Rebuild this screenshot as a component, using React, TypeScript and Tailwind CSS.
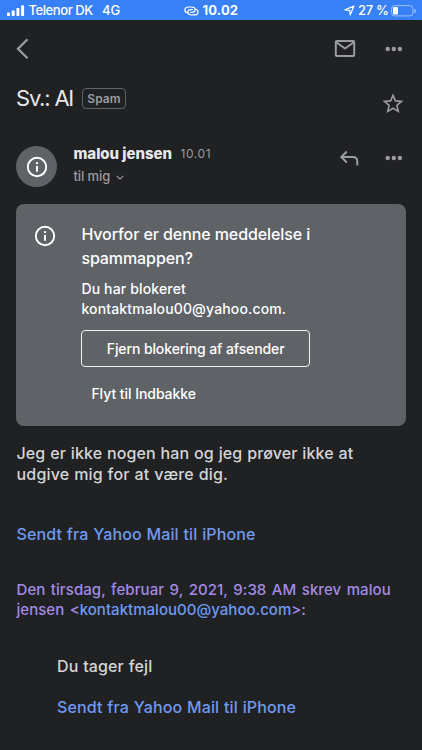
import React from "react";

function Dots() {
  return (
    <svg className="h-[6px] w-[18px] shrink-0" viewBox="0 0 18 6" fill="#9a9ca1">
      <circle cx="2.7" cy="3" r="2.2" />
      <circle cx="8.8" cy="3" r="2.2" />
      <circle cx="14.9" cy="3" r="2.2" />
    </svg>
  );
}

function Info() {
  return (
    <svg className="h-[22px] w-[22px] shrink-0" viewBox="0 0 22 22" fill="none">
      <circle cx="11" cy="11" r="9.2" stroke="#fff" strokeWidth="1.9" />
      <circle cx="11" cy="7.1" r="1.2" fill="#fff" />
      <path d="M11 10v5.8" stroke="#fff" strokeWidth="2" />
    </svg>
  );
}

function StatusBar() {
  return (
    <header className="flex h-5 items-center bg-[#3880f6] pt-px text-[13px] font-medium text-white">
      <svg className="ml-[7px] h-[12px] w-[18px]" viewBox="0 0 18 12" fill="#fff">
        <rect x="0" y="7.5" width="3" height="3.5" rx="0.7" />
        <rect x="4.7" y="5.5" width="3" height="5.5" rx="0.7" />
        <rect x="9.4" y="3" width="3" height="8" rx="0.7" />
        <rect x="14.1" y="0.3" width="3" height="10.7" rx="0.7" />
      </svg>
      <div className="ml-[3.5px] w-[73.5px] whitespace-nowrap tracking-[-0.42px]">Telenor DK</div>
      <div className="w-[81.5px]">4G</div>
      <svg className="h-[10px] w-[15px]" viewBox="0 0 15 10" fill="none" stroke="#fff" strokeWidth="1.2" strokeLinecap="round">
        <path d="M4.1 7C2 6.7.8 5.5.8 4 .8 2.2 2.5 1 4.8 1h2.7c2.2 0 3.7 1.1 3.7 2.700S9.700 6.400 7.700 6.400H6.500" />
        <path d="M10.700 3c2.100.3 3.400 1.400 3.400 2.900 0 1.800-1.700 3-4 3H7.500c-2.200 0-3.700-1-3.700-2.600S5.200 3.700 7.200 3.700h1.300" />
      </svg>
      <div className="ml-[4px] w-[141px] font-bold tracking-[0.15px]">10.02</div>
      <svg className="h-[11px] w-[11px]" viewBox="0 0 11 11" fill="none" stroke="#fff" strokeWidth="1.2" strokeLinejoin="round">
        <path d="M.9 4.900 9.900 1 6.200 9.900 5.700 5.300Z" />
      </svg>
      <div className="ml-[3.500px] w-[33px] whitespace-nowrap tracking-[-0.3px]">27 %</div>
      <svg className="h-[12px] w-[26px]" viewBox="0 0 26 12" fill="none">
        <rect x="0.6" y="0.6" width="21.300" height="10.300" rx="3" stroke="#9bbffb" />
        <rect x="2" y="2" width="5" height="7.500" rx="1.300" fill="#fff" />
        <path d="M23.300 4v4c1.200-.3 1.600-1 1.600-2s-.4-1.700-1.600-2Z" fill="#9bbffb" />
      </svg>
    </header>
  );
}

export default function App() {
  return (
    <div className="h-[750px] w-[422px] overflow-hidden bg-[#202123] font-['Inter','Liberation_Sans',sans-serif] text-[#d5d5d6]">
      <StatusBar />
      <nav className="flex h-[57px] items-center pl-4 pr-[19px]">
        <svg className="h-[22px] w-[14px]" viewBox="0 0 14 22" fill="none" stroke="#9a9ca1" strokeWidth="2.300">
          <path d="M11.500 1.200 2 10.700l9.500 9.500" />
        </svg>
        <svg className="ml-auto h-[18px] w-[22px]" viewBox="0 0 22 18" fill="none" stroke="#9a9ca1" strokeWidth="2" strokeLinejoin="round">
          <rect x="1.800" y="1" width="18.400" height="15" rx="1" />
          <path d="m2.200 2.300 8.800 6.200 8.800-6.200" />
        </svg>
        <div className="ml-[29px] flex"><Dots /></div>
      </nav>
      <section className="flex h-[69px] items-start pl-4 pr-[18px]">
        <h1 className="mt-[6px] w-[66px] whitespace-nowrap text-[22px] leading-[30px] tracking-[-1.200px] text-[#e8e8ea]">Sv.: AI</h1>
        <span className="mt-[11px] flex h-[21px] w-[44px] items-center justify-center rounded-[4px] border border-[#5f6368] text-[12px] font-semibold tracking-[0.1px] text-[#9a9ca1]">Spam</span>
        <svg className="ml-auto mt-[16px] h-[21px] w-[22px]" viewBox="0 0 22 21" fill="none" stroke="#9a9ca1" strokeWidth="1.600">
          <path d="m11 2.300 2.400 5.600 6.100.5-4.600 4 1.400 6-5.300-3.200-5.300 3.200 1.400-6-4.600-4 6.100-.5Z" />
        </svg>
      </section>
      <section className="flex h-[57.5px] items-start pl-4 pr-[19px]">
        <div className="flex h-[41px] w-[41px] items-center justify-center rounded-full bg-[#5f6368]"><Info /></div>
        <div className="ml-[16.500px]">
          <div className="flex h-[16px] items-center whitespace-nowrap">
            <strong className="w-[107px] text-[15px] font-extrabold tracking-[-0.050px] text-[#e8e8ea]">malou jensen</strong>
            <span className="text-[12px] tracking-[0.6px] text-[#9a9ca1]">10.01</span>
          </div>
          <div className="mt-[6px] flex h-[18px] items-center text-[13px] font-medium text-[#9a9ca1]">
            <span className="w-[42px] tracking-[-0.1px]">til mig</span>
            <svg className="h-[5px] w-[8px]" viewBox="0 0 8 5" fill="none" stroke="#9a9ca1" strokeWidth="1.200"><path d="m.8.8 3.200 3.200L7.200.8" /></svg>
          </div>
        </div>
        <svg className="ml-auto mt-[4px] h-[17px] w-[20px]" viewBox="0 0 20 17" fill="none" stroke="#9a9ca1" strokeWidth="2">
          <path d="M7.800 1.500 2.300 7l5.500 5.500M2.500 7h11.200c3 0 4.600 1.700 4.600 4.600v4" />
        </svg>
        <div className="ml-[26px] mt-[9px] flex"><Dots /></div>
      </section>
      <section className="ml-4 flex h-[222.500px] w-[389.500px] rounded-[8px] bg-[#5f6368] pl-[18px] pt-[18px] text-white">
        <div className="mt-[3.500px]"><Info /></div>
        <div className="ml-[25.400px] whitespace-nowrap">
          <h2 className="text-[16px] font-medium leading-[24px] tracking-[-0.090px]">
            <span className="block">Hvorfor er denne meddelelse i</span>
            <span className="block">spammappen?</span>
          </h2>
          <p className="mt-[9.500px] text-[14px] font-medium leading-[20px] tracking-[0.15px]">
            <span className="block">Du har blokeret</span>
            <span className="block">kontaktmalou00@yahoo.com.</span>
          </p>
          <button className="mt-[11px] flex h-[37px] w-[228.500px] items-center justify-center rounded-[4px] border border-[#f1f1f1] pb-px text-[14px] font-medium tracking-[-0.1px]">Fjern blokering af afsender</button>
          <button className="ml-[10px] mt-[17px] block text-[14px] font-medium leading-[20px] tracking-[-0.050px]">Flyt til Indbakke</button>
        </div>
      </section>
      <main className="whitespace-nowrap pl-[16.500px] pt-[17px] text-[16px] font-medium leading-[20.500px] tracking-[0.13px] [word-spacing:0.35px]">
        <p>
          <span className="block">Jeg er ikke nogen han og jeg prøver ikke at</span>
          <span className="block tracking-[0.18px]">udgive mig for at være dig.</span>
        </p>
        <p className="mt-[40px] text-[#6f9af0]">Sendt fra Yahoo Mail til iPhone</p>
        <p className="mt-[35.500px] text-[15px] leading-[19.500px] tracking-[0.070px] text-[#a28be6] [word-spacing:1.4px]">
          <span className="block">Den tirsdag, februar 9, 2021, 9:38 AM skrev malou</span>
          <span className="block tracking-[0.030px]">jensen &lt;<span className="text-[#6f9af0]">kontaktmalou00@yahoo.com</span>&gt;:</span>
        </p>
        <div className="mt-[37px] pl-[40.500px]">
          <p>Du tager fejl</p>
          <p className="mt-[20.500px] text-[#6f9af0]">Sendt fra Yahoo Mail til iPhone</p>
        </div>
      </main>
    </div>
  );
}
